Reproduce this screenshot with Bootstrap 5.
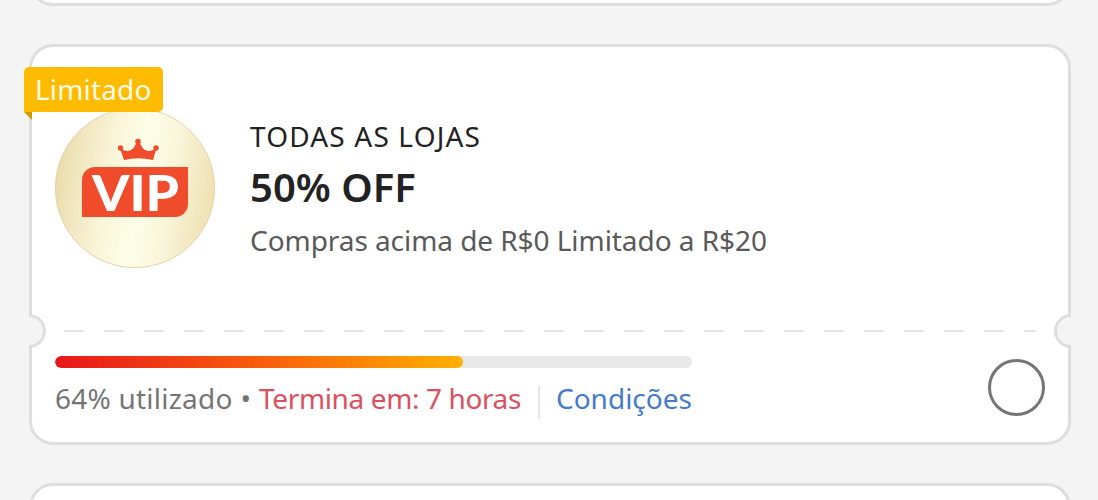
<!DOCTYPE html>
<html lang="pt-BR">
<head>
<meta charset="utf-8">
<meta name="viewport" content="width=device-width, initial-scale=1">
<title>Cupons</title>
<link href="https://cdn.jsdelivr.net/npm/bootstrap@5.3.0/dist/css/bootstrap.min.css" rel="stylesheet">
<style>
body { background: #f4f4f4; font-family: "Noto Sans", sans-serif; font-size: 28px; height: 500px; }
.voucher-list { gap: 38px; padding: 0 27px 0 29px; height: 500px; }
.voucher { border: 3px solid #dedede; border-radius: 24px; background: #fff; flex: none; }
.voucher-prev { height: 80px; margin-top: -74px; }
.voucher-main { height: 401px; }
.voucher-next { height: 100px; }
.voucher-top { height: 267px; padding: 61px 23px 0; }
.avatar { width: 160px; height: 160px; margin-right: 35px; }
.ribbon { left: -8px; top: 20px; width: 139px; height: 45px; padding-left: 11px; border-radius: 5px 5px 5px 0; background: #ffbb00; color: #fffbe8; line-height: 45px; letter-spacing: .15px; }
.ribbon::after { content: ""; position: absolute; left: 0; top: 100%; border-top: 8px solid #d39a00; border-left: 8px solid transparent; }
.copy { padding-top: 9px; line-height: 38px; color: #222; }
.shop { letter-spacing: 1.17px; }
.discount { font-size: 40px; font-weight: 600; line-height: 54px; margin-top: 5px; }
.terms { color: #595959; margin-top: 7px; letter-spacing: -.06px; }
.tear { height: 34px; padding-top: 16px; }
.dashes { height: 2px; margin: 0 32px; background: repeating-linear-gradient(90deg, #e3e3e3 0 20px, transparent 20px 40px); }
.notch { top: 0; width: 17px; height: 34px; background: #f4f4f4; border: 3px solid #dedede; }
.notch-start { left: -3px; border-left: 0; border-radius: 0 17px 17px 0; }
.notch-end { right: -3px; border-right: 0; border-radius: 17px 0 0 17px; }
.voucher-foot { padding: 8px 22px 0 23px; }
.usage { width: 637px; }
.progress { height: 12px; border-radius: 6px; background: #e8e8e8; }
.progress-bar { border-radius: 6px; background: linear-gradient(90deg, #e8161b, #f85c0c 50%, #ffb000); }
.status { margin-top: 11px; line-height: 38px; color: #757575; }
.status > * { flex: none; }
.used { letter-spacing: .22px; }
.dot { margin-left: 8px; }
.ends { color: #dc5060; margin-left: 8px; letter-spacing: -.38px; }
.sep { width: 2px; height: 33px; background: #e5e5e5; margin: 7px 16px 0 17px; }
.cond { color: #467bcc; }
.pick { width: 57px; height: 57px; border: 3px solid #757575; background-color: #fff; margin: 3px 1px 0 0; }
</style>
</head>
<body class="overflow-hidden">
<main class="voucher-list d-flex flex-column overflow-hidden">
  <article class="voucher voucher-prev"></article>
  <article class="voucher voucher-main position-relative">
    <div class="voucher-top d-flex align-items-start">
      <svg class="avatar flex-shrink-0" viewBox="0 0 160 160" role="img" aria-label="VIP">
        <defs><linearGradient id="gold" x1="0" y1=".42" x2="1" y2=".58">
          <stop offset="0" stop-color="#eadba8"/><stop offset=".12" stop-color="#f0e5bd"/><stop offset=".3" stop-color="#f8f3d5"/><stop offset=".52" stop-color="#fdfee8"/><stop offset=".72" stop-color="#f9f5da"/><stop offset="1" stop-color="#eee0b0"/>
        </linearGradient></defs>
        <circle cx="80" cy="80" r="79.6" fill="url(#gold)" stroke="#dfc8a0" stroke-width=".8"/>
        <path d="M40 59H133V96A13 13 0 0 1 120 109H27V72A13 13 0 0 1 40 59Z" fill="#f04b2b"/>
        <path d="M69 52L65 40C69 43.500 73 43.500 76 42Q80.500 39.500 81.500 33H84.500Q86 39.500 90 42C94 43.500 97 43.500 101.500 40L98 52Q83 48.500 69 52Z" fill="#f04b2b"/>
        <g fill="#f04b2b"><circle cx="65.500" cy="40" r="2.700"/><circle cx="83" cy="33.500" r="2.800"/><circle cx="101" cy="40" r="2.700"/></g>
        <text x="37" y="102.500" font-family="Lato, sans-serif" font-size="50" font-weight="900" fill="#fff" textLength="87" lengthAdjust="spacingAndGlyphs">VIP</text>
      </svg>
      <div class="copy text-nowrap">
        <div class="shop">TODAS AS LOJAS</div>
        <div class="discount">50% OFF</div>
        <div class="terms">Compras acima de R$0 Limitado a R$20</div>
      </div>
    </div>
    <div class="tear position-relative">
      <span class="notch notch-start position-absolute"></span>
      <span class="notch notch-end position-absolute"></span>
      <div class="dashes"></div>
    </div>
    <div class="voucher-foot d-flex justify-content-between align-items-start">
      <div class="usage">
        <div class="progress" role="progressbar" aria-valuenow="64" aria-valuemin="0" aria-valuemax="100"><div class="progress-bar" style="width:64%"></div></div>
        <div class="status d-flex text-nowrap">
          <span class="used">64% utilizado</span><span class="dot">•</span><span class="ends">Termina em: 7 horas</span><span class="sep"></span><a class="cond text-decoration-none" href="#">Condições</a>
        </div>
      </div>
      <input class="pick form-check-input rounded-circle" type="radio" aria-label="Selecionar cupom">
    </div>
    <span class="ribbon position-absolute">Limitado</span>
  </article>
  <article class="voucher voucher-next"></article>
</main>
<script src="https://cdn.jsdelivr.net/npm/bootstrap@5.3.0/dist/js/bootstrap.bundle.min.js"></script>
</body>
</html>
